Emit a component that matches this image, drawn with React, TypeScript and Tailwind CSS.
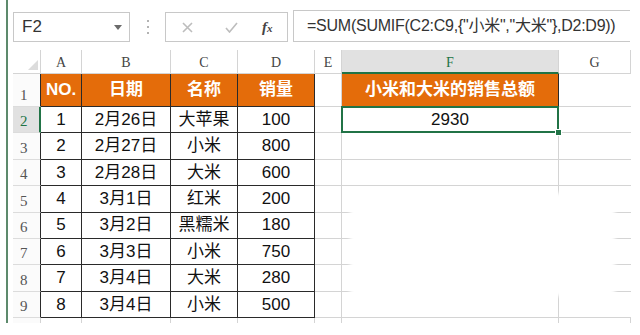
import React from "react";

const columns = [
  { key: "A", width: "w-[41px]" },
  { key: "B", width: "w-[89px]" },
  { key: "C", width: "w-[67px]" },
  { key: "D", width: "w-[77px]" },
  { key: "E", width: "w-[27px]" },
  { key: "F", width: "w-[217px]" },
  { key: "G", width: "w-[72px]" },
];

const headers = ["NO.", "日期", "名称", "销量"];

const formula = '=SUM(SUMIF(C2:C9,{"小米","大米"},D2:D9))';

const sales = [
  ["1", "2月26日", "大苹果", "100"],
  ["2", "2月27日", "小米", "800"],
  ["3", "2月28日", "大米", "600"],
  ["4", "3月1日", "红米", "200"],
  ["5", "3月2日", "黑糯米", "180"],
  ["6", "3月3日", "小米", "750"],
  ["7", "3月4日", "大米", "280"],
  ["8", "3月4日", "小米", "500"],
];

const RowHead: React.FC<{ n: number }> = ({ n }) => {
  const edge =
    n === 2
      ? "border-r-2 border-r-[#217346] bg-[#e1e1e1] text-[#217346]"
      : n >= 1 && n <= 9
        ? "border-r border-r-[#2a2a2a] bg-[#fbfbfb] text-[#555]"
        : "border-r border-r-[#d4d4d4] bg-[#fbfbfb] text-[#555]";
  return (
    <div
      className={`w-[28px] shrink-0 flex items-end pl-[7px] pb-[1px] border-b border-b-[#dcdcdc] text-[15px] leading-[20px] [font-family:'Liberation_Serif',serif] ${edge}`}
    >
      {n}
    </div>
  );
};

const FormulaBar: React.FC = () => (
  <div className="h-[50px] pt-[10px] pl-[5px] flex items-start">
    <div className="mt-[2px] w-[117px] h-[30px] border border-[#c8c8c8] flex items-center justify-between pl-[8px] pr-[7px] text-[17px] text-[#333]">
      <span>F2</span>
      <svg width="8" height="5" viewBox="0 0 8 5">
        <path d="M0 0h8L4 5z" fill="#6b6b6b" />
      </svg>
    </div>
    <div className="w-[35px] h-[32px] flex flex-col items-center justify-center gap-[4px] pt-[2px]">
      <span className="w-[2px] h-[2px] rounded-full bg-[#9a9a9a]" />
      <span className="w-[2px] h-[2px] rounded-full bg-[#9a9a9a]" />
      <span className="w-[2px] h-[2px] rounded-full bg-[#9a9a9a]" />
    </div>
    <div className="mt-[2px] w-[123px] h-[30px] border border-[#c8c8c8] flex items-center">
      <svg width="11" height="11" viewBox="0 0 11 11" className="ml-[16px]">
        <path d="M1 1l9 9M10 1l-9 9" stroke="#bdbdbd" strokeWidth="1.6" />
      </svg>
      <svg width="13" height="11" viewBox="0 0 13 11" className="ml-[32px]">
        <path d="M1 6l3.5 4L12 1" stroke="#bdbdbd" strokeWidth="1.6" fill="none" />
      </svg>
      <span className="ml-[24px] italic text-[15px] text-[#444] [font-family:'Liberation_Serif',serif] font-bold">
        f<span className="text-[11px]">x</span>
      </span>
    </div>
    <div className="ml-[5px] w-[337px] h-[32px] border-t border-b border-l border-[#c8c8c8] flex items-center pl-[13px] text-[16px] tracking-[-0.25px] text-[#333]">
      {formula}
    </div>
  </div>
);

const ColumnHeads: React.FC = () => (
  <div className="flex h-[24px]">
    <div className="w-[28px] shrink-0 relative border-r border-b border-[#d4d4d4]">
      <svg width="10" height="10" viewBox="0 0 10 10" className="absolute left-[15px] top-[10px]">
        <path d="M10 0v10H0z" fill="#dcdcdc" />
      </svg>
    </div>
    {columns.map((c) =>
      c.key === "F" ? (
        <div
          key={c.key}
          className={`${c.width} shrink-0 flex items-center justify-center pt-[2px] bg-[#e1e1e1] border-r border-r-[#d4d4d4] border-b-2 border-b-[#217346] text-[#217346] text-[14px] [font-family:'Liberation_Serif',serif]`}
        >
          {c.key}
        </div>
      ) : (
        <div
          key={c.key}
          className={`${c.width} shrink-0 flex items-center justify-center pt-[2px] border-r border-b border-[#d4d4d4] text-[#444] text-[14px] [font-family:'Liberation_Serif',serif]`}
        >
          {c.key}
        </div>
      )
    )}
  </div>
);

const App: React.FC = () => {
  return (
    <div className="relative w-[640px] h-[335px] overflow-hidden bg-white flex [font-family:'Liberation_Sans','Noto_Sans_CJK_SC',sans-serif]">
      <div className="w-[6px] shrink-0" />
      <div className="w-[2px] h-[323px] shrink-0 bg-[#5d8a6c]" />
      <div className="w-[632px] flex flex-col">
        <FormulaBar />
        <div className="ml-[5px] h-[273px] overflow-hidden flex flex-col">
          <ColumnHeads />

          {/* header row of the sales table */}
          <div className="flex h-[33px] shrink-0">
            <RowHead n={1} />
            {columns.slice(0, 4).map((c, i) => (
              <div
                key={c.key}
                className={`${c.width} shrink-0 flex items-center justify-center bg-[#e46c0a] border-r border-b border-[#2a2a2a] text-white font-bold text-[17px]`}
              >
                {headers[i]}
              </div>
            ))}
            <div className="w-[27px] shrink-0 border-r border-b border-[#d4d4d4]" />
            <div className="w-[217px] shrink-0 flex items-center justify-center bg-[#e46c0a] border-r border-b border-[#2a2a2a] text-white font-bold text-[17px]">
              小米和大米的销售总额
            </div>
            <div className="w-[72px] shrink-0 border-b border-[#d4d4d4]" />
          </div>

          {sales.map((row, r) => (
            <div key={r} className="flex h-[26.375px] shrink-0">
              <RowHead n={r + 2} />
              {row.map((v, i) => (
                <div
                  key={i}
                  className={`${columns[i].width} shrink-0 flex items-center justify-center border-r border-b border-[#2a2a2a] text-[17px] text-[#111]`}
                >
                  {v}
                </div>
              ))}
              <div className="w-[27px] shrink-0 border-r border-b border-[#d4d4d4]" />
              {r === 0 ? (
                <div className="w-[217px] shrink-0 relative flex items-center justify-center border-r border-b border-[#d4d4d4] text-[17px] text-[#111]">
                  2930
                  <div className="absolute -left-[1px] -top-[1px] -right-[1px] -bottom-[1px] border-2 border-[#217346]" />
                  <div className="absolute -right-[4px] -bottom-[4px] w-[7px] h-[7px] bg-[#217346] border border-white" />
                </div>
              ) : (
                <div className="w-[217px] shrink-0 border-r border-b border-[#d4d4d4]" />
              )}
              <div className="w-[72px] shrink-0 border-b border-[#d4d4d4]" />
            </div>
          ))}

          <div className="flex h-[26px] shrink-0">
            <RowHead n={10} />
            {columns.map((c) => (
              <div key={c.key} className={`${c.width} shrink-0 border-r border-[#d4d4d4]`} />
            ))}
          </div>
        </div>
      </div>

      {/* blank patch over the lower grid */}
      <div className="absolute left-[354px] top-[197px] w-[257px] h-[95px] bg-white shadow-[0_0_4px_4px_white]" />
    </div>
  );
};

export default App;
